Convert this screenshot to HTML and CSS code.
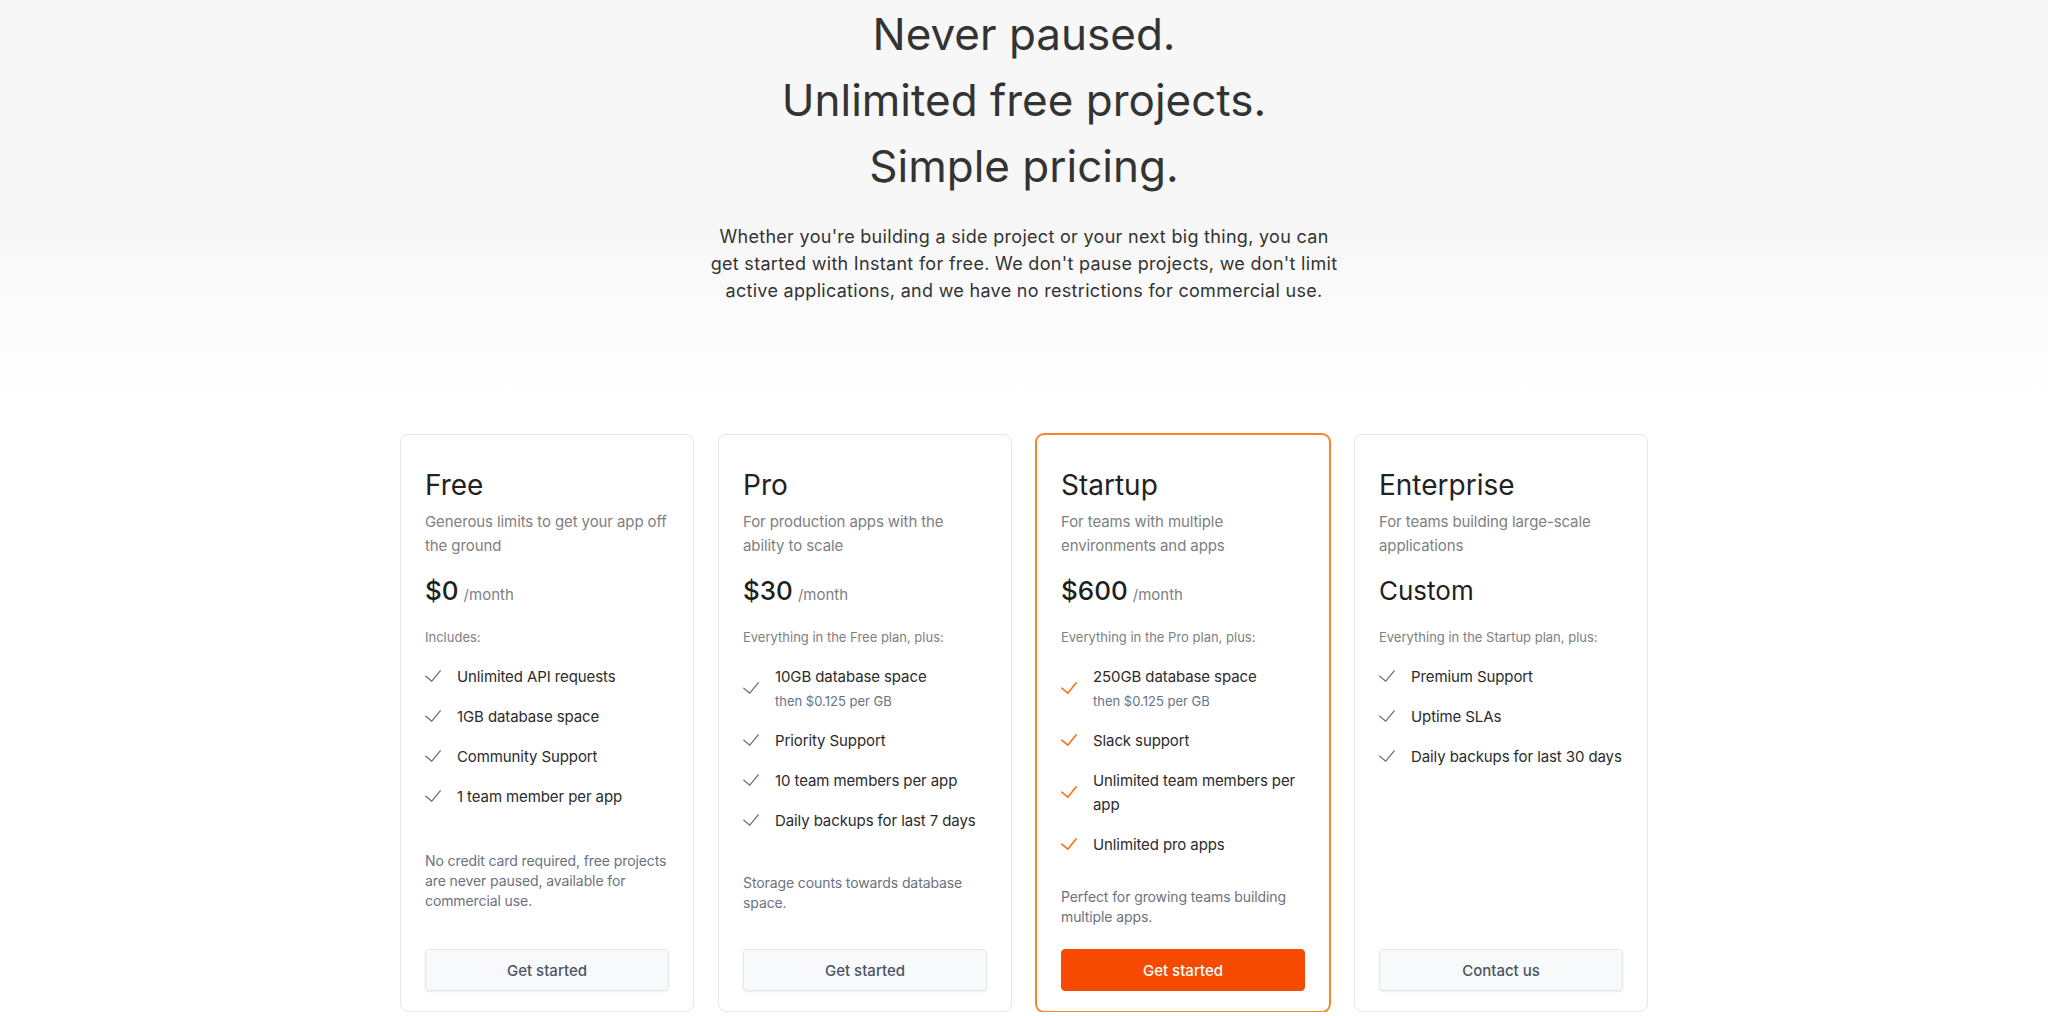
FILE: index.html
```html
<!DOCTYPE html>
<html lang="en">
<head>
<meta charset="utf-8">
<title>Pricing</title>
<link rel="stylesheet" href="styles.css">
</head>
<body>
  <section class="hero">
    <h1 class="hero-title">Never paused.<br>Unlimited free projects.<br>Simple pricing.</h1>
    <p class="hero-lead">Whether you're building a side project or your next big thing, you can get started with Instant for free. We don't pause projects, we don't limit active applications, and we have no restrictions for commercial use.</p>
  </section>

  <section class="plans">
    <div class="plan">
      <h2 class="plan-name">Free</h2>
      <p class="plan-desc">Generous limits to get your app off the ground</p>
      <div class="plan-price"><span class="amount">$0</span> <span class="period">/month</span></div>
      <p class="plan-includes">Includes:</p>
      <ul class="features">
        <li><svg class="check" viewBox="0 0 16 16"><path d="M0.8 7.2 L6.8 12.2 L15.2 1.8"/></svg><div>Unlimited API requests</div></li>
        <li><svg class="check" viewBox="0 0 16 16"><path d="M0.8 7.2 L6.8 12.2 L15.2 1.8"/></svg><div>1GB database space</div></li>
        <li><svg class="check" viewBox="0 0 16 16"><path d="M0.8 7.2 L6.8 12.2 L15.2 1.8"/></svg><div>Community Support</div></li>
        <li><svg class="check" viewBox="0 0 16 16"><path d="M0.8 7.2 L6.8 12.2 L15.2 1.8"/></svg><div>1 team member per app</div></li>
      </ul>
      <p class="plan-note">No credit card required, free projects are never paused, available for commercial use.</p>
      <button class="plan-btn">Get started</button>
    </div>

    <div class="plan">
      <h2 class="plan-name">Pro</h2>
      <p class="plan-desc">For production apps with the ability to scale</p>
      <div class="plan-price"><span class="amount">$30</span> <span class="period">/month</span></div>
      <p class="plan-includes">Everything in the Free plan, plus:</p>
      <ul class="features">
        <li><svg class="check" viewBox="0 0 16 16"><path d="M0.8 7.2 L6.8 12.2 L15.2 1.8"/></svg><div>10GB database space<span class="feature-sub">then $0.125 per GB</span></div></li>
        <li><svg class="check" viewBox="0 0 16 16"><path d="M0.8 7.2 L6.8 12.2 L15.2 1.8"/></svg><div>Priority Support</div></li>
        <li><svg class="check" viewBox="0 0 16 16"><path d="M0.8 7.2 L6.8 12.2 L15.2 1.8"/></svg><div>10 team members per app</div></li>
        <li><svg class="check" viewBox="0 0 16 16"><path d="M0.8 7.2 L6.8 12.2 L15.2 1.8"/></svg><div>Daily backups for last 7 days</div></li>
      </ul>
      <p class="plan-note">Storage counts towards database space.</p>
      <button class="plan-btn">Get started</button>
    </div>

    <div class="plan plan-featured">
      <h2 class="plan-name">Startup</h2>
      <p class="plan-desc">For teams with multiple environments and apps</p>
      <div class="plan-price"><span class="amount">$600</span> <span class="period">/month</span></div>
      <p class="plan-includes">Everything in the Pro plan, plus:</p>
      <ul class="features">
        <li><svg class="check" viewBox="0 0 16 16"><path d="M0.8 7.2 L6.8 12.2 L15.2 1.8"/></svg><div>250GB database space<span class="feature-sub">then $0.125 per GB</span></div></li>
        <li><svg class="check" viewBox="0 0 16 16"><path d="M0.8 7.2 L6.8 12.2 L15.2 1.8"/></svg><div>Slack support</div></li>
        <li><svg class="check" viewBox="0 0 16 16"><path d="M0.8 7.2 L6.8 12.2 L15.2 1.8"/></svg><div>Unlimited team members per app</div></li>
        <li><svg class="check" viewBox="0 0 16 16"><path d="M0.8 7.2 L6.8 12.2 L15.2 1.8"/></svg><div>Unlimited pro apps</div></li>
      </ul>
      <p class="plan-note">Perfect for growing teams building multiple apps.</p>
      <button class="plan-btn plan-btn-primary">Get started</button>
    </div>

    <div class="plan">
      <h2 class="plan-name">Enterprise</h2>
      <p class="plan-desc">For teams building large-scale applications</p>
      <div class="plan-price"><span class="amount amount-custom">Custom</span></div>
      <p class="plan-includes">Everything in the Startup plan, plus:</p>
      <ul class="features">
        <li><svg class="check" viewBox="0 0 16 16"><path d="M0.8 7.2 L6.8 12.2 L15.2 1.8"/></svg><div>Premium Support</div></li>
        <li><svg class="check" viewBox="0 0 16 16"><path d="M0.8 7.2 L6.8 12.2 L15.2 1.8"/></svg><div>Uptime SLAs</div></li>
        <li><svg class="check" viewBox="0 0 16 16"><path d="M0.8 7.2 L6.8 12.2 L15.2 1.8"/></svg><div>Daily backups for last 30 days</div></li>
      </ul>
      <button class="plan-btn">Contact us</button>
    </div>
  </section>
</body>
</html>
```

FILE: styles.css
```css
* {
  box-sizing: border-box;
}

html, body {
  margin: 0;
  padding: 0;
  background: #ffffff;
}

body {
  font-family: Inter, "Noto Sans", sans-serif;
  color: #333333;
  -webkit-font-smoothing: antialiased;
}

/* ---- hero ---- */
.hero {
  background: linear-gradient(to bottom, #f7f7f7 0%, #f7f7f7 58%, #ffffff 100%);
  padding: 1px 0 96px;
  text-align: center;
}

.hero-title {
  margin: 0;
  font-size: 44px;
  line-height: 66px;
  font-weight: 400;
  color: #333333;
}

.hero-lead {
  margin: 24px auto 0;
  max-width: 636px;
  font-size: 18px;
  line-height: 27px;
  color: #333333;
  letter-spacing: 0.3px;
}

/* ---- plan cards ---- */
.plans {
  display: grid;
  grid-template-columns: repeat(4, 1fr);
  gap: 24px;
  max-width: 1248px;
  margin: 34px auto 0;
}

.plan {
  display: flex;
  flex-direction: column;
  border: 1px solid #e6e6e6;
  border-radius: 8px;
  background: #ffffff;
  padding: 32px 24px 20px;
}

.plan-featured {
  border-color: #f7862b;
  box-shadow: 0 0 0 1px #f7862b;
}

.plan-name {
  margin: 0;
  font-size: 28px;
  line-height: 36px;
  font-weight: 400;
  color: #222222;
}

.plan-desc {
  margin: 7px 0 0;
  font-size: 15px;
  line-height: 24px;
  color: #808080;
  letter-spacing: -0.1px;
}

.plan-price {
  margin-top: 17px;
  display: flex;
  align-items: baseline;
  gap: 5px;
  height: 32px;
  line-height: 32px;
}

.amount {
  font-size: 26px;
  font-weight: 500;
  color: #1f1f1f;
}

.amount-custom {
  font-weight: 400;
}

.period {
  font-size: 15px;
  line-height: 1;
  color: #808080;
}

.plan-includes {
  margin: 20px 0 0;
  font-size: 13px;
  line-height: 20px;
  color: #808080;
}

/* ---- feature list ---- */
.features {
  list-style: none;
  margin: 18px 0 30px;
  padding: 0;
  display: flex;
  flex-direction: column;
  gap: 16px;
}

.features li {
  display: flex;
  align-items: center;
  gap: 16px;
  font-size: 15px;
  line-height: 24px;
  color: #2b2b2b;
  letter-spacing: -0.1px;
}

.check {
  flex: none;
  width: 16px;
  height: 16px;
  fill: none;
  stroke: #6b7280;
  stroke-width: 1.3;
  stroke-linecap: round;
  stroke-linejoin: round;
}

.plan-featured .check {
  stroke: #f97316;
  stroke-width: 1.6;
}

.feature-sub {
  display: block;
  font-size: 13px;
  line-height: 24px;
  color: #64748b;
  letter-spacing: 0;
}

.plan-note {
  margin: auto 0 27px;
  font-size: 14px;
  line-height: 20px;
  color: #6b7280;
  letter-spacing: -0.1px;
}

.plan-featured .plan-note {
  margin-bottom: 22px;
}

/* ---- buttons ---- */
.plan-btn {
  margin-top: auto;
  height: 42px;
  width: 100%;
  border: 1px solid #e5e7eb;
  border-radius: 4px;
  background: #f8f9fa;
  box-shadow: 0 1px 2px rgba(0, 0, 0, 0.08);
  font-family: inherit;
  font-size: 15px;
  font-weight: 500;
  color: #4b5563;
  cursor: pointer;
}

.plan-btn-primary {
  border-color: #f54a00;
  background: #f54a00;
  color: #ffffff;
  box-shadow: none;
}
```
